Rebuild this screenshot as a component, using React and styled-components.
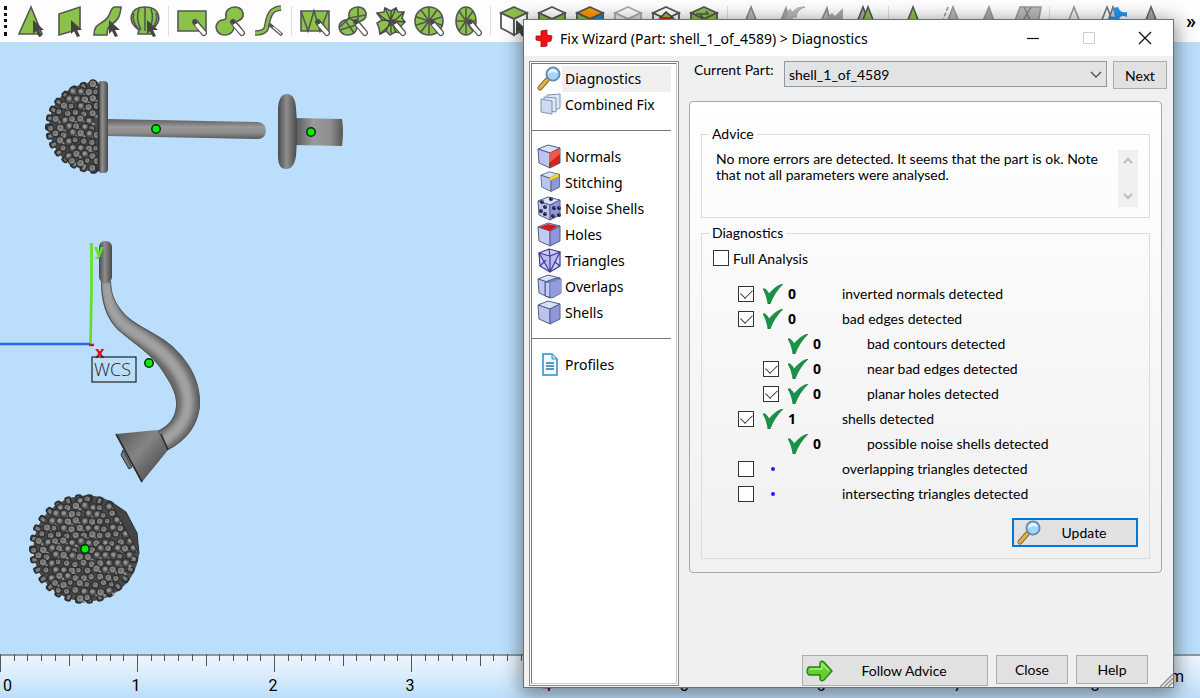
import React, { useState } from "react";
import styled, { createGlobalStyle, css } from "styled-components";

const GREEN = "#8bc34a";
const INK = "#555";

const toolGroups = [
  ["triangle", "plane", "ribbon", "shell"],
  ["rectPen", "blobPen", "curvePen"],
  ["rectMesh", "blobMesh", "starMesh", "circleMesh", "ellipseMesh"],
  ["cubeTop", "cubeSides", "cubeColor", "cubeGhost", "cubeInner", "cubeAll"],
  ["peakGrey", "peakUndo", "peakFlag", "peakPair"],
  ["peakGreen", "peakDash", "peakMid", "peakSheet"],
  ["peakLine", "peakSwap", "peakDark"],
];

const menuGroups = [
  ["Diagnostics", "Combined Fix"],
  ["Normals", "Stitching", "Noise Shells", "Holes", "Triangles", "Overlaps", "Shells"],
  ["Profiles"],
];

const checks = [
  { id: "normals", label: "inverted normals detected", count: 0, box: true, on: true },
  { id: "edges", label: "bad edges detected", count: 0, box: true, on: true },
  { id: "contours", label: "bad contours detected", count: 0, nested: true },
  { id: "near", label: "near bad edges detected", count: 0, box: true, on: true, nested: true },
  { id: "planar", label: "planar holes detected", count: 0, box: true, on: true, nested: true },
  { id: "shells", label: "shells detected", count: 1, box: true, on: true },
  { id: "noise", label: "possible noise shells detected", count: 0, nested: true },
  { id: "overlap", label: "overlapping triangles detected", box: true },
  { id: "intersect", label: "intersecting triangles detected", box: true },
];

/* ---------- toolbar icons ---------- */

const Arrow = () => (
  <path d="M17 14v14l3-3 3 6 3-1-3-6h5z" fill="#444" stroke="none" />
);

const Pen = () => (
  <g strokeLinecap="round">
    <path d="M18 16L27 27" stroke="#555" strokeWidth="6" />
    <path d="M20 19L27 27" stroke="#fff" strokeWidth="3.6" />
    <path d="M17 15l2 2" stroke="#444" strokeWidth="2" />
  </g>
);

const Blob = () => (
  <path d="M11 11C10 4 15 1 20 1c6 0 9 5 8 9-1 5-6 4-8 7-2 3 0 6-3 9-4 4-11 4-14 0-4-5-1-11 4-12 2 0 4-1 4-3z" />
);

const Cube = ({ top, left, right, stroke = INK }) => (
  <g stroke={stroke} strokeWidth="1.8">
    <path d="M15 1l13 6-13 6L2 7z" fill={top} />
    <path d="M2 7l13 6v16L2 22z" fill={left} />
    <path d="M28 7l-13 6v16l13-7z" fill={right} />
  </g>
);

const spokes = [0, 36, 72, 108, 144];

const toolIcons = {
  triangle: <><path d="M15 1L3 28h23z" /><Arrow /></>,
  plane: <><path d="M5 8l21-7v22L5 29z" /><Arrow /></>,
  ribbon: (
    <>
      <path d="M2 29C2 16 11 19 16 11c3-5 3-10 7-10h6c-1 10-3 13-9 17-4 2-5 6-5 11z" />
      <Arrow />
    </>
  ),
  shell: (
    <>
      <path d="M8 28l1-4C-4 15 0 1 15 1s19 14 6 23l1 4z" />
      <path d="M15 1v24M11 24C7 16 7 8 9 3M19 24c4-8 4-16 2-21M9 24C4 18 2 12 4 7M21 24c5-6 7-12 5-17" fill="none" />
      <Arrow />
    </>
  ),
  rectPen: <><path d="M1 5h28v20H1z" /><Pen /></>,
  blobPen: <><Blob /><Pen /></>,
  curvePen: (
    <>
      <path d="M2 27c14 0 11-7 13-13 2-7 4-11 13-12" fill="none" strokeWidth="5.6" />
      <path d="M2 27c14 0 11-7 13-13 2-7 4-11 13-12" fill="none" stroke={GREEN} strokeWidth="2.8" />
      <path d="M16 18l13 11" strokeWidth="3.6" />
      <path d="M20 21l8 7" stroke="#fff" strokeWidth="1.2" />
    </>
  ),
  rectMesh: (
    <>
      <path d="M1 5h28v20H1z" />
      <path d="M1 5l7 20 6-20 6 20 8-20" fill="none" />
      <Pen />
    </>
  ),
  blobMesh: (
    <>
      <Blob />
      <path d="M2 21l9-9 9 5M11 12l17-3M20 1l0 16M7 14l9 13M2 24l16-5" fill="none" />
      <Pen />
    </>
  ),
  starMesh: (
    <>
      <path d="M15 5l5-3 2 4 6 0-2 6 3 4-4 4 1 7-7-1-5 3-4-4-6 3-1-6-2-5 5-3L1 7l7-1 1-4z" />
      <path d="M15 5v22M1 7l25 19M28 6L4 28M6 14l23 2M9 2l11 24M20 2L10 25" fill="none" stroke="#444" strokeWidth="1.300" />
      <Pen />
    </>
  ),
  circleMesh: (
    <>
      <circle cx="15" cy="15" r="14" />
      {spokes.map((a) => (
        <path key={a} d="M1 15h28" transform={`rotate(${a + 18} 15 15)`} />
      ))}
      <Pen />
    </>
  ),
  ellipseMesh: (
    <>
      <ellipse cx="14" cy="15" rx="10" ry="14" />
      <path d="M14 1v28M4 15h20M7 5l14 20M21 5L7 25" />
      <Pen />
    </>
  ),
  cubeTop: <><Cube top={GREEN} left="#fff" right="#fff" /><path d="M17 14v14l3-3 3 6 5-7z" fill="#444" stroke="none" /></>,
  cubeSides: <Cube top="#fff" left={GREEN} right={GREEN} />,
  cubeColor: <Cube top="#ff9800" left={GREEN} right="#2286dc" />,
  cubeGhost: <Cube top="#fff" left="#eee" right="#ddd" stroke="#aaa" />,
  cubeInner: (
    <>
      <Cube top="#fff" left="#fff" right="#fff" />
      <path d="M9 12l6-6 7 6z" stroke="#444" />
      <path d="M10 11h10v4H10z" fill="#d22" stroke="none" />
    </>
  ),
  cubeAll: <><Cube top={GREEN} left={GREEN} right={GREEN} /><path d="M7 8h12l-2-3M14 12l-3-4" fill="none" /></>,
  peakGrey: <path d="M15 1L4 29h22z" fill="#bbb" stroke="#888" />,
  peakUndo: (
    <>
      <path d="M12 2L1 29h18z" fill="#aaa" stroke="#999" />
      <path d="M10 14l6-11 2 4c3-5 8-6 13-6-6 2-9 6-9 11l-3-2-2 8z" fill="#bbb" stroke="#aaa" strokeWidth="1" />
    </>
  ),
  peakFlag: (
    <>
      <path d="M15 2L3 29h18z" fill="#bbb" stroke="#888" />
      <path d="M12 14l8-7 3 3 8-8v12z" fill="#a8a8a8" stroke="none" />
    </>
  ),
  peakPair: <><path d="M13 1L2 29h22z" fill="#aaa" /><path d="M18 1L7 29h22z" /></>,
  peakGreen: <path d="M16 1L5 29h22z" />,
  peakDash: <><path d="M13 1L2 29" stroke="#999" strokeDasharray="4 2" /><path d="M18 1L7 29h22z" fill="#bbb" stroke="#999" /></>,
  peakMid: <path d="M16 1L4 29h22z" fill="#aaa" stroke="#999" />,
  peakSheet: <><path d="M9 1h21l-5 28H-1z" fill="#bbb" stroke="#999" /><path d="M13 1L24 25M20 1L6 25" stroke="#888" /></>,
  peakLine: <path d="M16 1L5 29h22z" fill="#eee" stroke="#999" />,
  peakSwap: (
    <>
      <path d="M11 1L0 29h22z" fill="#fff" stroke="#777" />
      <path d="M17 1L7 29h22z" fill="#ccc" stroke="#777" />
      <path d="M17 2l5-1c2 5 5 6 9 5v5c-4-2-6-1-8 1l4 3H12l2-5 5 1z" fill="#2794ee" stroke="none" />
    </>
  ),
  peakDark: <path d="M17 1L6 29h22z" fill="#aaa" stroke="#666" />,
};

/* ---------- dialog icons ---------- */

const Magnifier = () => (
  <svg width="26" height="26" viewBox="0 0 26 26">
    <path d="M4 22l7-8" stroke="#8a6a2a" strokeWidth="5" strokeLinecap="round" />
    <path d="M4 22l7-8" stroke="#e3b04d" strokeWidth="3" strokeLinecap="round" />
    <circle cx="17" cy="8" r="6.6" fill="#a9d4f5" stroke="#5d8cb8" strokeWidth="1.8" />
    <path d="M12.500 8a4.500 4.500 0 0 1 9-1c-3-1-6-1-9 1z" fill="#e6f4ff" />
  </svg>
);

const Block = ({ top = "#dcdff6", left = "#bcc3ee", right = "#8f97d8" }) => (
  <g stroke="#50608c" strokeWidth="1" strokeLinejoin="round">
    <path d="M1 5l10-4 12 3-10 5z" fill={top} />
    <path d="M1 5l12 4v15L2 19z" fill={left} />
    <path d="M23 4L13 9v15l10-5z" fill={right} />
  </g>
);

const menuIcons = {
  "Combined Fix": (
    <g stroke="#7f93ad" strokeWidth="1" fill="#dfe7f7">
      <path d="M10 3l13-1v14l-5 2H10z" />
      <path d="M7 5l12 1v14l-12-2z" />
      <path d="M4 7l11 2v13L4 20z" fill="#cdd9f3" />
    </g>
  ),
  Normals: (
    <>
      <Block />
      <path d="M12 9l11-4v14l-11 5z" fill="#d3221c" />
      <path d="M12 9l11-4v5l-11 9z" fill="#e85a4c" />
    </>
  ),
  Stitching: (
    <g transform="translate(3 1) scale(.85)">
      <Block />
      <path d="M11 8l11-5v4l-8 3-1 2z" fill="#ffe11a" stroke="#a89410" strokeWidth=".6" />
    </g>
  ),
  "Noise Shells": (
    <>
      <Block />
      {[[5, 6], [14, 3], [4, 15], [8, 11], [8, 18], [17, 12], [22, 12], [16, 20], [22, 19]].map(([x, y]) => (
        <g key={`${x}-${y}`}>
          <circle cx={x} cy={y} r="2" fill="#23263c" />
          <circle cx={x + 1} cy={y - 1} r=".8" fill="#8b90b8" />
        </g>
      ))}
    </>
  ),
  Holes: (
    <>
      <Block left="#c4caf1" />
      <path d="M2 5l9-3 10 2-8 5z" fill="#cf1f24" />
    </>
  ),
  Triangles: (
    <g fill="#cfcff5" stroke="#3d3a94" strokeWidth="1.200" strokeLinejoin="round">
      <path d="M2 5l10-4 11 3v14l-10 6-10-6z" />
      <path d="M2 5l11 3 10-4-10 20z" fill="#bdbbee" />
      <path d="M13 8v16M3 18l6-6M23 18l-5-4M12 1l1 7" />
    </g>
  ),
  Overlaps: (
    <>
      <Block />
      <path d="M8 8l11-4 5 1v14l-9 5-7-2z" fill="#6f86c0" stroke="#50608c" />
      <path d="M13 9l11-4v14l-10 5z" fill="#949be0" />
      <path d="M10.500 9v13" stroke="#c3cbf2" strokeWidth="3" />
    </>
  ),
  Shells: <Block />,
  Profiles: (
    <g>
      <path d="M6 2h9l5 5v16H6z" fill="#f2faff" stroke="#2a8fc4" strokeWidth="1.500" />
      <path d="M15 2v5h5" fill="#bfe4f7" stroke="#2a8fc4" />
      <path d="M9 11h8M9 14h8M9 17h8" stroke="#2277b0" strokeWidth="1.300" />
    </g>
  ),
};

const Tick = () => (
  <svg width="22" height="20" viewBox="0 0 22 20">
    <path d="M0 5c2-1 4 1 6 5C10 5 15 1 20 0 14 6 10 12 7 20H5C4 13 2 8 0 5z" fill="#169447" stroke="#0c6b32" strokeWidth=".6" />
  </svg>
);

/* ---------- 3D scene ---------- */

const noise = (n) => {
  const v = Math.sin(n * 127.1) * 43758.5453;
  return v - Math.floor(v);
};

const makeBeads = (cx, cy, rx, ry, inside) => {
  const beads = [];
  for (let row = -9; row <= 9; row++) {
    for (let col = -9; col <= 9; col++) {
      const x = col * 8.2 + (row % 2 ? 4.1 : 0);
      const y = row * 7;
      if ((x * x) / (rx * rx) + (y * y) / (ry * ry) > 0.84) continue;
      const n = noise(row * 31 + col * 7 + 400);
      const bead = { x: cx + x + n * 3 - 1.5, y: cy + y + noise(n * 90) * 3 - 1.5, n };
      if (inside(bead)) beads.push(bead);
    }
  }
  return beads;
};

const makeRim = (cx, cy, rx, ry, inside) =>
  Array.from({ length: 30 }, (_, i) => {
    const a = (i / 30) * Math.PI * 2;
    return { x: cx + Math.cos(a) * rx, y: cy + Math.sin(a) * ry, a: (a * 180) / Math.PI };
  }).filter(inside);

const domeInside = (p) => p.x < 98;
const ballInside = (p) => (p.x - 110) * 52 - (p.y - 501) * 29 < 0;

const Beads = ({ beads, rim }) => (
  <>
    {rim.map((b) => (
      <g key={b.a} transform={`translate(${b.x} ${b.y}) rotate(${b.a})`}>
        <rect x="-5" y="-3.500" width="8" height="7" rx="2.500" fill="#2f2f2f" />
        <rect x="-4" y="-2" width="5" height="3.500" rx="1" fill="#7a7a7a" />
      </g>
    ))}
    {beads.map((b) => (
      <g key={`${b.x}-${b.y}`}>
        <circle cx={b.x} cy={b.y} r={3 + b.n * 1.6} fill={b.n > 0.6 ? "#555" : "#858585"} stroke="#303030" strokeWidth="1.400" />
        <circle cx={b.x - 0.4} cy={b.y - 0.5} r={b.n > 0.6 ? 2 : 1.4} fill={b.n > 0.6 ? "#929292" : "#6c6c6c"} />
        {b.n > 0.35 && <circle cx={b.x + 4} cy={b.y + 3} r="1.500" fill="#8f8f8f" />}
      </g>
    ))}
  </>
);

const Marker = ({ x, y }) => (
  <circle cx={x} cy={y} r="4.200" fill="#00f000" stroke="#0a2a0a" strokeWidth="1.500" />
);

const hook =
  "M101 281C101 302 106 318 118 330C134 344 152 354 163 372C172 386 177 394 176 407C175 418 168 427 157 431L168 450C186 441 200 424 200 402C200 380 189 361 171 345C154 331 133 325 122 311C114 301 111 292 111 281Z";

const Scene = () => (
  <SceneSvg width="524" height="612" viewBox="0 42 524 612">
    <defs>
      <linearGradient id="barV" x1="0" y1="0" x2="0" y2="1">
        <stop offset="0" stopColor="#5c5c5c" />
        <stop offset=".4" stopColor="#999" />
        <stop offset=".7" stopColor="#8c8c8c" />
        <stop offset="1" stopColor="#585858" />
      </linearGradient>
      <linearGradient id="barH" x1="0" y1="0" x2="1" y2="0">
        <stop offset="0" stopColor="#4a4a4a" />
        <stop offset=".45" stopColor="#8e8e8e" />
        <stop offset="1" stopColor="#484848" />
      </linearGradient>
      <linearGradient id="neck" x1="0" y1="0" x2="1" y2="0">
        <stop offset="0" stopColor="#555" />
        <stop offset=".4" stopColor="#9a9a9a" />
        <stop offset=".75" stopColor="#8c8c8c" />
        <stop offset="1" stopColor="#565656" />
      </linearGradient>
      <linearGradient id="cone" x1="0" y1="0" x2=".9" y2=".8">
        <stop offset="0" stopColor="#555" />
        <stop offset=".5" stopColor="#858585" />
        <stop offset="1" stopColor="#4c4c4c" />
      </linearGradient>
      <clipPath id="hookClip"><path d={hook} /></clipPath>
      <filter id="soft"><feGaussianBlur stdDeviation="2.500" /></filter>
    </defs>

    <path d="M106 119L258 122Q266 123 266 131Q265 139 258 139L106 136Z" fill="url(#barV)" />
    <path d="M98 82C72 82 50 98 49 126C50 154 72 171 98 172Z" fill="#4a4a4a" />
    <Beads
      beads={makeBeads(101, 127, 56, 48, domeInside)}
      rim={makeRim(99, 127, 51, 44, domeInside)}
    />
    <rect x="98" y="81" width="10" height="92" rx="4" fill="url(#barH)" />
    <path d="M98.500 84v87" stroke="#333" strokeWidth="2" />
    <path d="M294 118L342 119Q344 132 342 146L294 145Z" fill="url(#neck)" />
    <path d="M278 108Q279 94 287 94T296 108Q298 131 296 156Q294 169 286 169T278 156Z" fill="url(#barH)" />
    <Marker x={156} y={129} />
    <Marker x={311} y={132} />

    <path d={hook} fill="#666" />
    <g clipPath="url(#hookClip)">
      <path d="M106 281C107 310 118 322 132 331C158 346 188 370 188 404C187 422 176 433 160 443" fill="none" stroke="#a2a2a2" strokeWidth="12" filter="url(#soft)" />
      <path d={hook} fill="none" stroke="#565656" strokeWidth="2" />
    </g>
    <rect x="99" y="241" width="13" height="42" rx="6" fill="url(#barH)" />
    <path d="M123 450l9 17-3 2-8-14z" fill="#777" stroke="#333" />
    <path d="M116 434L157 430L168 450L142 482Z" fill="url(#cone)" />
    <path d="M116 434L142 482M161 434L168 450" stroke="#2c2c2c" strokeWidth="1.600" />

    <path d="M91.500 243V292L90.500 344" fill="none" stroke="#62e01c" strokeWidth="2.600" />
    <path d="M0 344H90" stroke="#2c66f0" strokeWidth="2.400" />
    <path d="M89 345h5" stroke="#d81010" strokeWidth="2.400" />
    <AxisText x="94" y="256" fill="#62e01c">y</AxisText>
    <AxisText x="95" y="358" fill="#d81010">x</AxisText>
    <rect x="92" y="357" width="44" height="25" fill="none" stroke="#222" strokeWidth="1.200" />
    <WcsText x="94" y="376">WCS</WcsText>
    <Marker x={149} y={363} />

    <path d="M110 501A53 53 0 1 0 139 555L134 530Z" fill="#4a4a4a" />
    <Beads
      beads={makeBeads(84, 549, 54, 54, ballInside)}
      rim={makeRim(84, 549, 52, 52, ballInside)}
    />
    <path d="M110 501L126 512L137 533L139 554Z" fill="#444" stroke="#2e2e2e" />
    <Marker x={85} y={549} />
  </SceneSvg>
);

/* ---------- ruler ---------- */

const UNIT = 137;

const RulerScale = () => {
  const ticks = Array.from({ length: 86 }, (_, i) => i);
  const height = (i) => (i % 10 === 0 ? 18 : i % 5 === 0 ? 12 : 7);
  return (
    <RulerSvg>
      <rect width="100%" height="2" fill="#8d979f" />
      {ticks.map((i) => (
        <rect key={i} x={Math.round((i * UNIT) / 10)} width="1" height={height(i)} fill="#555" />
      ))}
      {[1, 2, 3, 4, 5, 6, 7, 8].map((n) => (
        <text key={n} x={n * UNIT - 1} y="37" textAnchor="middle">{n}</text>
      ))}
      <text x="3" y="37">0</text>
      <text x="1184" y="28" textAnchor="end">mm</text>
    </RulerSvg>
  );
};

const App = () => {
  const [active, setActive] = useState("Diagnostics");

  return (
    <Page>
      <GlobalStyle />
      <Toolbar>
        <Grip />
        {toolGroups.map((group, i) => (
          <React.Fragment key={group[0]}>
            {i > 0 && <Divider />}
            {group.map((name) => (
              <Tool key={name} type="button" aria-label={name}>
                <svg width="30" height="30" viewBox="0 0 30 30" fill={GREEN} stroke={INK} strokeWidth="1.600">
                  {toolIcons[name]}
                </svg>
              </Tool>
            ))}
          </React.Fragment>
        ))}
        <More type="button">»</More>
      </Toolbar>
      <Viewport>
        <Scene />
      </Viewport>
      <Ruler>
        <RulerScale />
      </Ruler>

      <Dialog role="dialog" aria-labelledby="dialog-title">
        <TitleBar>
          <svg width="18" height="18" viewBox="0 0 18 18">
            <path d="M6 2l6-1v5l5 1-1 5-4 1v4l-6 1v-6l-5-1V7h5z" fill="#f01212" stroke="#a80808" strokeWidth=".8" />
          </svg>
          <Title id="dialog-title">Fix Wizard (Part: shell_1_of_4589) &gt; Diagnostics</Title>
          <WindowButton type="button" aria-label="Minimize">
            <svg width="14" height="14" viewBox="0 0 14 14"><path d="M1 7.500h12" stroke="#111" strokeWidth="1.200" /></svg>
          </WindowButton>
          <WindowButton type="button" aria-label="Maximize" disabled>
            <svg width="14" height="14" viewBox="0 0 14 14"><path d="M1.500 1.500h11v11h-11z" fill="none" stroke="#ccc" /></svg>
          </WindowButton>
          <WindowButton type="button" aria-label="Close window">
            <svg width="14" height="14" viewBox="0 0 14 14"><path d="M1 1l12 12M13 1L1 13" stroke="#111" strokeWidth="1.300" /></svg>
          </WindowButton>
        </TitleBar>

        <Body>
          <Sidebar>
            <SidebarInner>
              {menuGroups.map((group, i) => (
                <MenuGroup key={group[0]} $line={i > 0}>
                  {group.map((name) => (
                    <MenuItem key={name} type="button" $active={name === active} onClick={() => setActive(name)}>
                      {name === "Diagnostics" ? (
                        <Magnifier />
                      ) : (
                        <svg width="26" height="26" viewBox="-1 0 26 26" fill="none">{menuIcons[name]}</svg>
                      )}
                      <span>{name}</span>
                    </MenuItem>
                  ))}
                </MenuGroup>
              ))}
            </SidebarInner>
          </Sidebar>

          <Content>
            <PartRow>
              <PartLabel htmlFor="part">Current Part:</PartLabel>
              <SelectWrap>
                <Select id="part" defaultValue="shell_1_of_4589">
                  <option>shell_1_of_4589</option>
                </Select>
                <svg width="12" height="8" viewBox="0 0 12 8"><path d="M1 1l5 5 5-5" fill="none" stroke="#555" strokeWidth="1.400" /></svg>
              </SelectWrap>
              <Button type="button">Next</Button>
            </PartRow>

            <Panel>
              <Group>
                <legend>Advice</legend>
                <Advice>
                  <p>No more errors are detected. It seems that the part is ok. Note that not all parameters were analysed.</p>
                  <Scrollbar>
                    <svg width="12" height="8" viewBox="0 0 12 8"><path d="M2 7l4-4 4 4" fill="none" stroke="#bbb" strokeWidth="2" /></svg>
                    <svg width="12" height="8" viewBox="0 0 12 8"><path d="M2 1l4 4 4-4" fill="none" stroke="#bbb" strokeWidth="2" /></svg>
                  </Scrollbar>
                </Advice>
              </Group>

              <Group>
                <legend>Diagnostics</legend>
                <FullAnalysis>
                  <Checkbox id="full" />
                  <label htmlFor="full">Full Analysis</label>
                </FullAnalysis>
                <CheckList>
                  {checks.map((c) => (
                    <CheckRow key={c.id} $nested={c.nested}>
                      {c.box ? <Checkbox id={c.id} defaultChecked={c.on} /> : <span />}
                      {c.count === undefined ? <Dot /> : <Tick />}
                      <Count>{c.count}</Count>
                      {c.box ? <label htmlFor={c.id}>{c.label}</label> : <span>{c.label}</span>}
                    </CheckRow>
                  ))}
                </CheckList>
                <UpdateButton type="button">
                  <Magnifier />
                  <span>Update</span>
                </UpdateButton>
              </Group>
            </Panel>

            <Footer>
              <FollowButton type="button">
                <svg width="28" height="24" viewBox="0 0 28 24">
                  <path d="M3 8h11V4q1-3 4-1l8 9-8 9q-3 2-4-1v-4H3q-2-1-2-4t2-4z" fill="#5fd02c" stroke="#2b8012" strokeWidth="1.400" />
                  <path d="M4 10h12V5l7 7" fill="none" stroke="#a6ee7c" strokeWidth="1.400" />
                </svg>
                <span>Follow Advice</span>
              </FollowButton>
              <FooterButton type="button">Close</FooterButton>
              <FooterButton type="button">Help</FooterButton>
            </Footer>
          </Content>
        </Body>
        <Resize width="14" height="14" viewBox="0 0 14 14">
          <path d="M1 14L14 1M5 14l9-9M9 14l5-5" stroke="#999" strokeWidth="1.600" />
        </Resize>
      </Dialog>
    </Page>
  );
};

export default App;

const GlobalStyle = createGlobalStyle`
  * {
    box-sizing: border-box;
  }

  body {
    margin: 0;
    color: #000;
    font-family: Lato, "Liberation Sans", sans-serif;
    font-size: 14px;
  }

  button,
  select,
  input {
    margin: 0;
    font: inherit;
    color: inherit;
  }

  svg {
    flex-shrink: 0;
  }
`;

const Page = styled.div`
  position: relative;
  display: flex;
  flex-direction: column;
  min-height: 100vh;
  overflow: hidden;
  background: #badefb;
`;

const Toolbar = styled.div`
  display: flex;
  align-items: center;
  gap: 8px;
  height: 42px;
  padding: 0 4px;
  background: #fdfdfd;
`;

const Grip = styled.span`
  width: 4px;
  height: 30px;
  border-left: 3px dotted #111;
`;

const Divider = styled.span`
  width: 1px;
  height: 30px;
  background: #ddd;
`;

const Tool = styled.button`
  width: 30px;
  height: 30px;
  padding: 0;
  border: 0;
  background: none;

  svg {
    display: block;
    overflow: visible;
  }
`;

const More = styled.button`
  margin-left: auto;
  padding: 0;
  border: 0;
  background: none;
  font-family: Roboto, sans-serif;
  font-size: 20px;
  font-weight: 700;
`;

const Viewport = styled.main`
  flex: 1;
`;

const SceneSvg = styled.svg`
  display: block;
`;

const AxisText = styled.text`
  font-family: "DejaVu Sans", sans-serif;
  font-size: 15px;
  font-weight: 700;
`;

const WcsText = styled.text`
  fill: #222;
  font-family: "Open Sans", sans-serif;
  font-size: 18px;
  font-weight: 300;
`;

const Ruler = styled.div`
  height: 44px;
  background: linear-gradient(#edf5fd, #dcedfc 45%, #bbdefb);
`;

const RulerSvg = styled.svg`
  display: block;
  width: 100%;
  height: 44px;
  font-family: Roboto, sans-serif;
  font-size: 16px;
`;

const Dialog = styled.section`
  position: absolute;
  top: 19px;
  left: 523px;
  display: flex;
  flex-direction: column;
  width: 651px;
  height: 669px;
  border: 1px solid #6b7075;
  background: #f0f0f0;
  box-shadow: 0 4px 18px 2px rgba(0, 0, 0, 0.45);
`;

const TitleBar = styled.header`
  display: flex;
  align-items: center;
  height: 36px;
  padding-left: 11px;
  background: #fff;
`;

const Title = styled.h1`
  flex: 1;
  margin: 0 0 0 7px;
  font-family: "Noto Sans", sans-serif;
  font-size: 14px;
  font-weight: 400;
`;

const WindowButton = styled.button`
  display: flex;
  align-items: center;
  justify-content: center;
  width: 56px;
  height: 34px;
  padding: 0;
  border: 0;
  background: none;
`;

const Body = styled.div`
  display: flex;
  flex: 1;
  min-height: 0;
  gap: 10px;
  padding: 5px 10px 1px 5px;
`;

const Sidebar = styled.nav`
  width: 150px;
  padding: 1px;
  border: 1px solid #8a8a8a;
  background: #fff;
`;

const SidebarInner = styled.div`
  height: 100%;
  padding: 2px 5px 0 0;
  border: 1px solid #777;
  border-right-color: #ccc;
  border-bottom-color: #ccc;
`;

const MenuGroup = styled.div`
  ${({ $line }) =>
    $line &&
    css`
      margin-top: 12px;
      padding-top: 13px;
      border-top: 1px solid #777;
    `}
`;

const MenuItem = styled.button`
  display: flex;
  align-items: center;
  width: 100%;
  height: 26px;
  padding: 0 0 0 4px;
  border: 0;
  background: none;
  text-align: left;
  font-family: "Noto Sans", sans-serif;
  font-size: 14px;

  span {
    flex: 1;
    padding: 0 3px;
    line-height: 26px;
    background: ${({ $active }) => ($active ? "#f0f0f0" : "none")};
  }
`;

const Content = styled.div`
  display: flex;
  flex: 1;
  flex-direction: column;
  min-width: 0;
  padding-right: 1px;
`;

const PartRow = styled.div`
  display: flex;
  align-items: flex-start;
  margin: 0 -5px 0 5px;
`;

const PartLabel = styled.label`
  width: 90px;
`;

const SelectWrap = styled.div`
  position: relative;
  flex: 1;
  margin-right: 6px;

  svg {
    position: absolute;
    top: 10px;
    right: 5px;
    pointer-events: none;
  }
`;

const Select = styled.select`
  width: 100%;
  height: 26px;
  padding: 0 4px;
  border: 1px solid #8d9aa6;
  border-radius: 0;
  background: #e1e3e5;
  appearance: none;
`;

const Button = styled.button`
  width: 54px;
  height: 28px;
  padding: 0;
  border: 1px solid #adadad;
  background: #e1e1e1;
`;

const Panel = styled.div`
  display: flex;
  flex-direction: column;
  gap: 7px;
  height: 472px;
  margin-top: 12px;
  padding: 24px 11px 13px;
  border: 1px solid #a8a8a8;
  border-radius: 4px;
  background: linear-gradient(#fff, #f0f0f0);
`;

const Group = styled.fieldset`
  margin: 0;
  padding: 8px 11px 10px;
  border: 1px solid #dcdcdc;

  legend {
    margin-left: -4px;
    padding: 0 3px;
    line-height: 16px;
  }

  &:last-child {
    flex: 1;
  }
`;

const Advice = styled.div`
  display: flex;
  justify-content: space-between;
  padding-left: 3px;

  p {
    width: 390px;
    margin: 1px 0 0;
    line-height: 16px;
  }
`;

const Scrollbar = styled.div`
  display: flex;
  flex-direction: column;
  align-items: center;
  justify-content: space-between;
  width: 20px;
  height: 57px;
  padding: 6px 0;
  background: #f0f0f0;
`;

const FullAnalysis = styled.div`
  display: flex;
  align-items: center;
  gap: 4px;
  height: 16px;
  margin-top: 1px;
`;

const Checkbox = styled.input.attrs({ type: "checkbox" })`
  position: relative;
  width: 16px;
  height: 16px;
  border: 1px solid #333;
  background: #fff;
  appearance: none;

  &:checked::after {
    content: "";
    position: absolute;
    top: 2px;
    left: 2px;
    width: 10px;
    height: 6px;
    border: solid #333;
    border-width: 0 0 1px 1px;
    transform: rotate(-45deg);
  }
`;

const CheckList = styled.div`
  margin-top: 15px;
`;

const CheckRow = styled.div`
  display: grid;
  grid-template-columns: 25px 25px 54px 1fr;
  align-items: center;
  height: 25px;
  padding-left: ${({ $nested }) => ($nested ? "50px" : "25px")};
`;

const Count = styled.b`
  font-family: "Noto Sans", sans-serif;
  font-size: 14px;
`;

const Dot = styled.i`
  width: 4px;
  height: 4px;
  margin-left: 8px;
  border-radius: 50%;
  background: #1c1cff;
`;

const UpdateButton = styled.button`
  display: flex;
  align-items: center;
  width: 126px;
  height: 29px;
  margin: 12px 0 0 auto;
  padding: 0 2px;
  border: 2px solid #0078d7;
  background: #e1e1e1;

  span {
    flex: 1;
    padding-right: 10px;
    padding-left: 2px;
  }
`;

const Footer = styled.div`
  display: flex;
  gap: 8px;
  justify-content: flex-end;
  margin-top: auto;
  padding-right: 14px;
`;

const FooterButton = styled(Button)`
  width: 72px;
  height: 29px;
`;

const FollowButton = styled(Button)`
  display: flex;
  align-items: center;
  width: 186px;
  height: 31px;
  padding: 0 3px;

  span {
    flex: 1;
    padding-right: 10px;
  }
`;

const Resize = styled.svg`
  position: absolute;
  right: 0;
  bottom: 0;
`;
